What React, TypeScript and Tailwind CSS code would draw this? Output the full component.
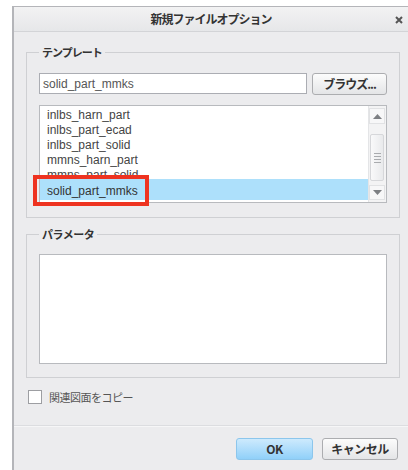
import React from "react"

const jp = "font-['Noto_Sans_CJK_JP','Noto_Sans',sans-serif]"
const latin = "font-['Liberation_Sans','Noto_Sans_CJK_JP',sans-serif]"

const templates = ["inlbs_harn_part", "inlbs_part_ecad", "inlbs_part_solid", "mmns_harn_part"]

function ArrowUp() {
  return (
    <svg width="9" height="5" viewBox="0 0 9 5">
      <path d="M0 5 L4.5 0 L9 5 Z" fill="#7d7f83" />
    </svg>
  )
}

function ArrowDown() {
  return (
    <svg width="9" height="5" viewBox="0 0 9 5">
      <path d="M0 0 L4.5 5 L9 0 Z" fill="#7d7f83" />
    </svg>
  )
}

function Scrollbar() {
  return (
    <div className="flex w-[18px] flex-col border-l border-[#e4e5e7] bg-[#f3f3f4] py-[2px] pr-[1px]">
      <div className="flex h-[17px] items-center justify-center border border-[#e1e2e4] bg-[#f7f7f8]">
        <ArrowUp />
      </div>
      <div className="flex flex-1 flex-col px-[1px] pt-[10px] pb-[4px]">
        <div className="flex h-[47px] items-center justify-center rounded-[2px] border border-[#d6d7da] bg-gradient-to-r from-[#f9f9fa] to-[#e9eaec]">
          <div className="flex flex-col gap-[2px]">
            <div className="h-px w-[7px] bg-[#a9abae]" />
            <div className="h-px w-[7px] bg-[#a9abae]" />
            <div className="h-px w-[7px] bg-[#a9abae]" />
            <div className="h-px w-[7px] bg-[#a9abae]" />
          </div>
        </div>
      </div>
      <div className="flex h-[15px] items-center justify-center border border-[#e1e2e4] bg-[#f7f7f8]">
        <ArrowDown />
      </div>
    </div>
  )
}

function Button({ label, primary }: { label: string; primary?: boolean }) {
  return (
    <button
      className={`flex h-[22px] items-center justify-center rounded-[3px] border text-[12px] font-bold tracking-[-0.5px] text-[#333] ${jp} ${
        primary
          ? "w-[77px] border-[#8cc6ec] bg-gradient-to-b from-[#cdeafd] to-[#90d0f9]"
          : "w-[76px] border-[#acadb0] bg-gradient-to-b from-[#fcfcfc] to-[#e4e5e7]"
      }`}
    >
      {label}
    </button>
  )
}

export default function App() {
  return (
    <div className="h-[470px] w-[408px] overflow-hidden bg-white pt-[6px] pl-[12px]">
      <div className="flex h-[464px] flex-col border-t border-l-2 border-[#b4b5b9] bg-[#ececee]">
        {/* title bar */}
        <div className="relative flex h-[25px] items-center justify-center border-b border-[#d3d4d7] bg-gradient-to-b from-[#f2f2f3] to-[#e6e7e9]">
          <span className={`text-[12px] font-bold tracking-[-1px] text-[#333] ${jp}`}>
            新規ファイルオプション
          </span>
          <svg className="absolute right-[5px] top-[9px]" width="8" height="8" viewBox="0 0 8 8">
            <path d="M1 1 L7 7 M7 1 L1 7" stroke="#555" strokeWidth="2" />
          </svg>
        </div>

        {/* template group */}
        <fieldset className="mt-[12px] ml-[12px] w-[374px] border border-[#cfd0d3] px-[12px] pb-[14px]">
          <legend className={`px-[3px] text-[11px] leading-[16px] font-bold tracking-[-1px] text-[#333] ${jp}`}>
            テンプレート
          </legend>
          <div className="mt-[13px] flex gap-[5px]">
            <div
              className={`flex h-[21px] w-[268px] items-center border border-[#abadb3] bg-white pl-[3px] text-[12px] text-[#555] ${latin}`}
            >
              solid_part_mmks
            </div>
            <button
              className={`flex h-[22px] w-[75px] items-center justify-center rounded-[3px] border border-[#acadb0] bg-gradient-to-b from-[#fcfcfc] to-[#e4e5e7] text-[12px] font-bold tracking-[-1px] text-[#333] ${jp}`}
            >
              ブラウズ...
            </button>
          </div>

          <div className="relative mt-[10px]">
            <div className="flex h-[98px] border border-[#b8babe] bg-white">
              <div className={`flex-1 overflow-hidden pt-[2px] text-[12px] text-[#444] ${latin}`}>
                {templates.map((t) => (
                  <div key={t} className="h-[15px] pl-[7px] leading-[15px]">
                    {t}
                  </div>
                ))}
                {/* half-scrolled row, clipped by the selection below */}
                <div className="h-[11px] overflow-hidden pl-[7px] leading-[15px]">mmns_part_solid</div>
                <div className="h-[21px] bg-[#ade0fb] pt-[4px] pl-[7px] leading-[17px] text-[#333]">
                  solid_part_mmks
                </div>
              </div>
              <Scrollbar />
            </div>
            {/* highlight marker */}
            <div className="absolute top-[70px] left-[-6px] h-[31px] w-[116px] border-4 border-[#ee3320]" />
          </div>
        </fieldset>

        {/* parameter group */}
        <fieldset className="mt-[8px] ml-[12px] w-[374px] border border-[#cfd0d3] px-[12px] pb-[13px]">
          <legend className={`px-[3px] text-[11px] leading-[16px] font-bold tracking-[-0.5px] text-[#333] ${jp}`}>
            パラメータ
          </legend>
          <div className="mt-[12px] h-[110px] border border-[#b8babe] bg-white" />
        </fieldset>

        {/* copy drawing option */}
        <label className="mt-[11px] ml-[14px] flex items-center gap-[7px]">
          <span className="h-[14px] w-[14px] border border-[#9d9ea2] bg-white" />
          <span className={`text-[11px] tracking-[-0.5px] text-[#555] ${jp}`}>関連図面をコピー</span>
        </label>

        <div className="mt-[19px] border-t border-b border-t-[#dcdde0] border-b-[#f6f6f7]" />

        <div className="mt-[11px] flex justify-end gap-[9px] pr-[10px]">
          <Button label="OK" primary />
          <Button label="キャンセル" />
        </div>
      </div>
    </div>
  )
}
